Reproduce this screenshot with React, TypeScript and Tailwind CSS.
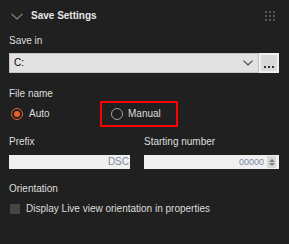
function Grip() {
	return (
		<div className="grid grid-cols-3 gap-[2px]">
			{Array.from({ length: 9 }).map((_, i) => (
				<div key={i} className="h-[2px] w-[2px] bg-[#555]" />
			))}
		</div>
	);
}

function Label({ children }: { children: React.ReactNode }) {
	return <p className="h-[14px] flex items-center">{children}</p>;
}

export default function App() {
	return (
		<div
			className="w-[289px] h-[244px] bg-[#202020] text-[#dedede] text-[10px] leading-none overflow-hidden"
			style={{ fontFamily: '"Liberation Sans", Arial, sans-serif' }}
		>
			{/* header */}
			<div className="flex items-center h-[32px] pl-[11px] pr-[14px]">
				<svg width="12" height="7" viewBox="0 0 12 7" fill="none" stroke="#8a8a8a" strokeWidth="1.1">
					<polyline points="0.5,0.8 6,6 11.5,0.8" />
				</svg>
				<span className="ml-[8px] font-bold text-[#e6e6e6]">Save Settings</span>
				<div className="ml-auto">
					<Grip />
				</div>
			</div>

			<div className="pl-[9px] pr-[10px]">
				<div className="mt-[2px]">
					<Label>Save in</Label>
				</div>
				<div className="mt-[5px] flex h-[20px]">
					<div className="flex flex-1 items-center bg-[#e1e1e1] border border-[#c4c4c4] pl-[4px] pr-[5px] text-black">
						<span>C:</span>
						<svg className="ml-auto" width="10" height="6" viewBox="0 0 10 6" fill="none" stroke="#4a4a4a" strokeWidth="1.2">
							<polyline points="0.5,0.6 5,5 9.5,0.6" />
						</svg>
					</div>
					<div className="w-[20px] border-2 border-[#f0f0f0] bg-[#d9d9d9] flex items-end justify-center pb-[3px]">
						<div className="flex gap-[2px]">
							<div className="h-[2px] w-[2px] bg-[#333]" />
							<div className="h-[2px] w-[2px] bg-[#333]" />
							<div className="h-[2px] w-[2px] bg-[#333]" />
						</div>
					</div>
				</div>

				<div className="mt-[14px]">
					<Label>File name</Label>
				</div>
				<div className="flex items-center h-[26px]">
					<div className="flex items-center w-[91px]">
						<div className="ml-[2px] h-[12px] w-[12px] rounded-full border-[1.5px] border-[#e5622b] flex items-center justify-center">
							<div className="h-[6px] w-[6px] rounded-full bg-[#e5622b]" />
						</div>
						<span className="ml-[6px]">Auto</span>
					</div>
					<div className="flex items-center h-[26px] w-[78px] border-2 border-[#ff0000] pl-[9px]">
						<div className="h-[12px] w-[12px] rounded-full border-[1.5px] border-[#a0a0a0]" />
						<span className="ml-[5px]">Manual</span>
					</div>
				</div>

				<div className="mt-[8px] flex">
					<div className="w-[121px]">
						<Label>Prefix</Label>
						<div className="mt-[6px] h-[14px] bg-[#f0f0f0] flex items-center justify-end pr-[1px] text-[#7a89a2] text-[10px]">DSC</div>
					</div>
					<div className="ml-[14px] flex-1">
						<Label>Starting number</Label>
						<div className="mt-[6px] h-[14px] bg-[#f0f0f0] flex items-center justify-end pr-[3px] text-[#7a89a2] text-[9px]">
							<span>00000</span>
							<div className="ml-[3px] flex flex-col items-center justify-center gap-[1px] w-[9px] h-[12px] bg-[#d6d6d6]">
								<div className="w-0 h-0 border-l-[3px] border-r-[3px] border-b-[3px] border-l-transparent border-r-transparent border-b-[#808080]" />
								<div className="w-0 h-0 border-l-[3px] border-r-[3px] border-t-[3px] border-l-transparent border-r-transparent border-t-[#808080]" />
							</div>
						</div>
					</div>
				</div>

				<div className="mt-[13px]">
					<Label>Orientation</Label>
				</div>
				<div className="mt-[6px] flex items-center h-[14px]">
					<div className="ml-[1px] h-[10px] w-[10px] bg-[#464646]" />
					<span className="ml-[6px]">Display Live view orientation in properties</span>
				</div>
			</div>
		</div>
	);
}
